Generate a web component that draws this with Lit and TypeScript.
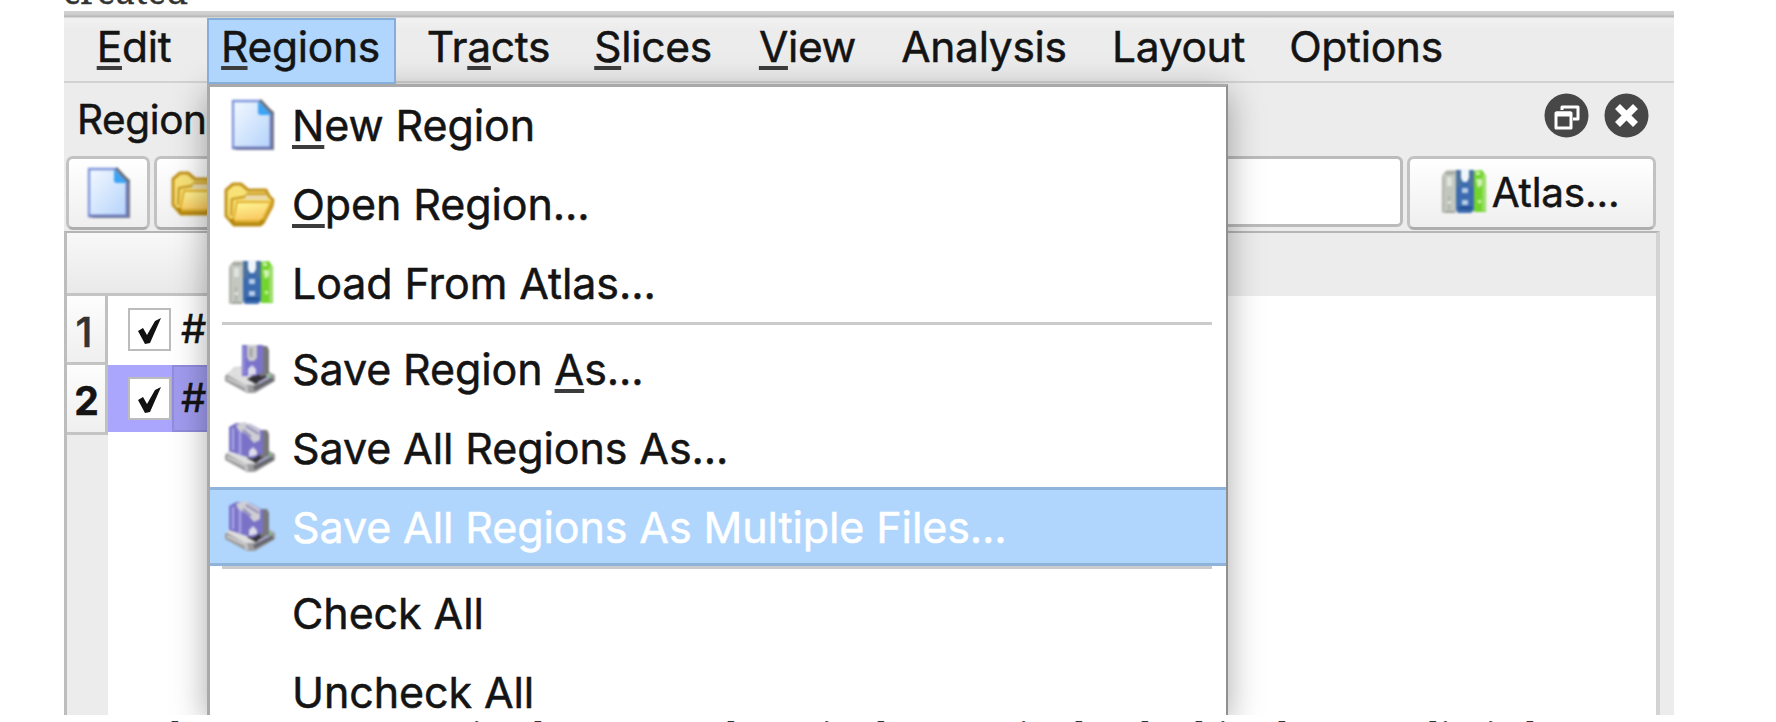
import { LitElement, html, css, svg } from "lit";
import { customElement, property } from "lit/decorators.js";
import { classMap } from "lit/directives/class-map.js";

const doc = svg`
  <defs><linearGradient id="dg" x1="0" y1="0" x2="1" y2="1"><stop offset="0" stop-color="#f4f9ff"/><stop offset="1" stop-color="#b4d3fb"/></linearGradient></defs>
  <path d="M12 51H50V13L46 10V47H12Z" fill="#77777d"/>
  <path d="M9 2H36L47 15V49H9Z" fill="url(#dg)" stroke="#7f97dc" stroke-width="2.4"/>
  <path d="M9 49H47V16" fill="none" stroke="#6d77b4" stroke-width="2.4"/>
  <path d="M34 2L48 16H37Q33 16 34 11Z" fill="#3da4f4"/>
  <path d="M36 1L49 15" stroke="#66717f" stroke-width="3"/>`;
const folder = svg`
  <defs><linearGradient id="fg" x1="0" y1="0" x2="0.3" y2="1"><stop offset="0" stop-color="#fff99a"/><stop offset="1" stop-color="#f9c962"/></linearGradient></defs>
  <path d="M2 12L9 6H17L24 12H42L45 18L49 22L48 28L39 45L36 47H10L2 38Z" fill="#f8e277" stroke="#c3941f" stroke-width="3" stroke-linejoin="round"/>
  <path d="M7 38L8 21L20 19L24 16H42" fill="none" stroke="#cda02b" stroke-width="2.5"/>
  <path d="M22 17H43V22H20Z" fill="#ead9a6"/>
  <path d="M13 24H47L38 43H9Z" fill="url(#fg)" stroke="#e1b02f" stroke-width="2" stroke-linejoin="round"/>
  <path d="M7 41L10 46H36L39 42" fill="none" stroke="#b5870f" stroke-width="3.5"/>`;
const books = svg`
  <path d="M5 9L10 4H19V47H5Z" fill="#c3c7c0"/>
  <path d="M8 7H18M8 46H18" stroke="#9da29b" stroke-width="2"/>
  <path d="M6 11V46M12 30V44" stroke="#aeb3ab" stroke-width="2"/>
  <path d="M10 11h5v9h-5zM11 35h3v3h-3z" fill="#e0e4de"/>
  <path d="M19 4H37V44L34 47H21L19 44Z" fill="#3c6cb0"/>
  <path d="M19 5h5v16h-5zM32 5h5v16h-5z" fill="#4c739e"/>
  <path d="M24 3H32V12L30 16H26L24 12Z" fill="#f0f5fb"/>
  <path d="M25 22h6v5h-6zM25 34h6v5h-6z" fill="#b8cce8"/>
  <path d="M22 42H35" stroke="#234f94" stroke-width="3"/>
  <path d="M37 5L45 4L49 10V46H37Z" fill="#72d52d"/>
  <path d="M47 9V45" stroke="#a5df78" stroke-width="3"/>
  <path d="M39 6H43V9H39ZM39 13H45V19L41 22ZM41 34h3v3h-3z" fill="#d0f3b2"/>`;
const drive = svg`
  <path d="M1 33L11 24L34 23L51 32V38L31 50H23L1 38Z" fill="#9c9c9e"/>
  <path d="M2 31L12 24L33 25L48 32L29 42H21Z" fill="#dededf"/>
  <path d="M3 35L22 44L23 49" fill="none" stroke="#c7c7c8" stroke-width="3"/>
  <path d="M23 36L33 31L44 33L32 41Z" fill="#303034"/>
  <path d="M30 46L49 36" stroke="#66666e" stroke-width="4"/>
  <path d="M34 40L46 34" stroke="#a9a6cc" stroke-width="2"/>
  <circle cx="46" cy="33" r="1.8" fill="#75b875"/>`;
const save = svg`${drive}
  <path d="M36 3H43L45 7V31L36 34Z" fill="#77777b"/>
  <path d="M18 2H39V29L32 33H18Z" fill="#7b73ca"/>
  <path d="M23 2H33V15L30 18H25L23 14Z" fill="#c9cacb"/>
  <path d="M27 5V14" stroke="#a3a3a7" stroke-width="3"/>
  <path d="M24 33V26L28 22L32 26V31Z" fill="#dcdcea"/>
  <path d="M20 4V31" stroke="#948dde" stroke-width="2"/>`;
const saveAll = svg`${drive}
  <path d="M37 8H43L45 12V34L36 36Z" fill="#77777b"/>
  <path d="M5 5L12 1L26 2L39 9V31L29 37L5 29Z" fill="#7a72c6"/>
  <path d="M9 6V28M16 9V32" stroke="#a9a3ea" stroke-width="2.5"/>
  <path d="M12 3L20 0L27 3L36 8V18L30 21L23 13L14 8Z" fill="#cfcfd3"/>
  <path d="M22 4L35 12M19 8L27 15" stroke="#9893bf" stroke-width="2.5"/>
  <path d="M25 35V29L29 25L33 29V33Z" fill="#dcdcea"/>`;
const icons: Record<string, unknown> = { doc, folder, books, save, saveAll };

@customElement("tool-icon")
class ToolIcon extends LitElement {
  @property() name = "";
  static styles = css`
    :host { display: block; width: 52px; height: 52px; flex: none; }
    svg { display: block; overflow: visible; filter: blur(0.8px); }
  `;
  render() {
    return html`<svg width="52" height="52" viewBox="0 0 52 52">${icons[this.name]}</svg>`;
  }
}

interface Entry { label: string; icon?: string; active?: boolean }
const groups: Entry[][] = [
  [
    { label: "&New Region", icon: "doc" },
    { label: "&Open Region...", icon: "folder" },
    { label: "Load From Atlas...", icon: "books" },
  ],
  [
    { label: "Save Region &As...", icon: "save" },
    { label: "Save All Regions As...", icon: "saveAll" },
    { label: "Save All Regions As Multiple Files...", icon: "saveAll", active: true },
  ],
  [{ label: "Check All" }, { label: "Uncheck All" }],
];
// label and slot width of each menu title
const bar: [string, number][] = [
  ["&Edit", 124], ["&Regions", 189], ["Tr&acts", 185], ["&Slices", 144],
  ["&View", 165], ["Analysis", 188], ["Layout", 201], ["Options", 174],
];
// chunks of the paragraph below, each with its advance
const prose: [string, number][] = [
  ["have one more", 300], ["is", 63], ["here as one", 193], ["has a", 94], ["in", 56], ["here or", 141], ["in", 57],
  ["has", 66], ["ba", 54], ["him", 83], ["here or as", 151], ["li", 56], ["is", 41], ["has", 80],
];

// "&" marks the letter that is underlined as the keyboard mnemonic
const mnemonic = (s: string) => {
  const i = s.indexOf("&");
  return i < 0 ? html`<span>${s}</span>` : html`<span>${s.slice(0, i)}<u>${s[i + 1]}</u>${s.slice(i + 2)}</span>`;
};

@customElement("app-root")
class AppRoot extends LitElement {
  static styles = css`
    :host { display: block; position: relative; height: 722px; overflow: hidden; background: #fff;
      font-family: Inter, Roboto, sans-serif; color: #141414; }
    * { box-sizing: border-box; }
    u { text-decoration: underline; text-decoration-thickness: 4px; text-underline-offset: 4px; text-decoration-color: #3c3c3c;
      text-decoration-skip-ink: none; }
    .prose { font: 35px/40px "Noto Serif", serif; color: #333; white-space: nowrap; }
    .before { height: 11px; display: flex; align-items: flex-end; padding-left: 63px; -webkit-text-stroke: 0.4px #333; }
    .after { height: 7px; display: flex; padding-left: 171px; }
    .after span { flex: none; margin-top: -1px; }
    .frame { height: 704px; width: 1610px; margin-left: 64px; background: #ececec; position: relative;
      overflow: hidden; display: flex; flex-direction: column; -webkit-text-stroke: 0.5px currentColor; }
    .edge { height: 7px; flex: none; background: linear-gradient(#d0d0d0 0 40%, #b9b9b9 80%, #e4e4e4); }
    .bar { height: 65px; flex: none; display: flex; font-size: 42.5px; line-height: 57px; border-bottom: 2px solid #d2d2d2;
      padding-left: 19px; white-space: nowrap; letter-spacing: -0.3px; background: linear-gradient(#f1f1f1, #ececec 20%); }
    .bar div { display: flex; justify-content: center; }
    .bar div:first-child { padding-right: 22px; }
    .bar .open { background: #b0d6fe; border: 2px solid #86aedb; line-height: 53px; position: relative; z-index: 3; height: 66px;
      padding-right: 2px; }
    .title { height: 73px; flex: none; display: flex; align-items: center; padding: 0 25px 8px 13px; font-size: 40.5px; letter-spacing: -0.4px; }
    .title span { flex: 1; padding-top: 8px; }
    .title svg { display: block; margin-left: 15px; filter: blur(0.7px); }
    .tools { height: 75px; flex: none; display: flex; gap: 4px; padding-left: 2px; align-items: flex-start; }
    .btn { height: 74px; border: 3px solid #c2c2c2; border-bottom-color: #adadad; border-radius: 7px;
      background: linear-gradient(#fff, #efefef); display: flex; align-items: center; justify-content: center; }
    .new { width: 84px; padding-right: 4px; }
    .load { width: 85px; }
    .search { width: 1160px; height: 71px; border: 3px solid #bbb; border-radius: 6px; background: #fff; }
    .atlas { width: 249px; font-size: 40.5px; letter-spacing: -0.2px; gap: 3px; padding: 0 7px 2px 0; }
    .table { flex: 1; margin-right: 14px; border-left: 3px solid #bdbdbd; border-right: 4px solid #d3d3d3; border-top: 2px solid #b5b5b5;
      background: #fff; display: grid; grid-template-rows: 63px 69px 70px 1fr; grid-template-columns: 41px 1fr; }
    .head { grid-column: 1 / 3; display: flex; background: #ececec; }
    .corner { width: 160px; background: linear-gradient(#f8f8f8, #e9e9e9); border-bottom: 3px solid #c4c4c4; }
    .num { background: linear-gradient(#fdfdfd, #efefef); border-right: 3px solid #c0c0c0; border-bottom: 3px solid #c4c4c4;
      font-weight: 700; font-size: 39px; line-height: 72px; text-align: center; padding-left: 1px; }
    .num.first { font-weight: 500; color: #333; font-size: 41px; padding: 0 4px 0 0; }
    .cell { display: flex; align-items: center; padding: 0 0 3px 20px; font-size: 40px; }
    .cell.sel { background: linear-gradient(#aba6fd, #aba6fd) left top / 900px 67px no-repeat; padding-bottom: 3px; }
    .cell span { border: 2px solid transparent; border-right: 0; padding-left: 7px; width: 200px; height: 67px; line-height: 62px; }
    .cell.sel span { background: #a09bee; border-color: #918cdc; }
    .check { width: 43px; height: 43px; border: 2px solid #bcbcbc; background: #fff; margin-right: 1px; flex: none; }
    .check svg { display: block; }
    .side { background: #ececec; }
    .menu { position: absolute; left: 143px; top: 73px; width: 1021px; height: 631px; background: #fff; border: 3px solid #a9a9a9;
      border-right: 2px solid #909090; border-bottom: 0; overflow: hidden;
      box-shadow: 0 8px 32px rgba(0, 0, 0, 0.34); font-size: 43px; letter-spacing: -0.1px; white-space: nowrap; }
    .item { height: 79px; flex: none; display: flex; align-items: center; gap: 16px; padding: 0 0 0 14px; }
    .item:first-child { margin-top: -2px; }
    .group + .sep + .group .item:first-child { margin-top: 0; }
    .item .none { width: 52px; }
    .item.active { background: #b0d6fe; color: #fff; box-shadow: inset 0 3px #8fb3da, inset 0 -3px #8fb3da; }
    .group { display: flex; flex-direction: column; }
    .sep { height: 3px; background: #cbcbcb; margin: 0 14px 4px 12px; }
  `;

  render() {
    return html`
      <div class="prose before">created</div>
      <div class="frame">
        <div class="edge"></div>
        <div class="bar">
          ${bar.map(([b, w], i) => html`<div class=${classMap({ open: i === 1 })} style="width:${w}px">${mnemonic(b)}</div>`)}
        </div>
        <div class="title">
          <span>Region</span>
          <svg width="45" height="45" viewBox="0 0 45 45"><circle cx="22.5" cy="22.5" r="22" fill="#474747"/>
            <g fill="none" stroke="#fff" stroke-width="3" stroke-linejoin="round"><path d="M18 17V14H34V26H29"/><path d="M12 20H27V35H12Z"/></g>
            <path d="M12 21H27" stroke="#fff" stroke-width="5"/></svg>
          <svg width="45" height="45" viewBox="0 0 45 45"><circle cx="22.5" cy="22.5" r="22" fill="#474747"/>
            <path d="M13.5 13.5L31.5 31.5M31.5 13.5L13.5 31.5" stroke="#fff" stroke-width="7"/></svg>
        </div>
        <div class="tools">
          <div class="btn new"><tool-icon name="doc"></tool-icon></div>
          <div class="btn load"><tool-icon name="folder"></tool-icon></div>
          <div class="search"></div>
          <div class="btn atlas"><tool-icon name="books"></tool-icon>Atlas...</div>
        </div>
        <div class="table">
          <div class="head"><div class="corner"></div></div>
          ${[1, 2].map((n) => html`
            <div class=${classMap({ num: true, first: n === 1 })}>${n}</div>
            <div class=${classMap({ cell: true, sel: n === 2 })}>
              <div class="check"><svg width="39" height="39" viewBox="0 0 39 39"><path d="M8 21L13 18L17 25L25 11L31 8L20 33L15 34Z" fill="#111"/></svg></div>
              <span>#</span>
            </div>`)}
          <div class="side"></div>
        </div>
        <div class="menu">
          ${groups.map((g, i) => html`
            ${i ? html`<div class="sep"></div>` : ""}
            <div class="group">
              ${g.map((e) => html`<div class=${classMap({ item: true, active: !!e.active })}>
                ${e.icon ? html`<tool-icon name=${e.icon}></tool-icon>` : html`<div class="none"></div>`}${mnemonic(e.label)}
              </div>`)}
            </div>`)}
        </div>
      </div>
      <div class="prose after">${prose.map(([t, w]) => html`<span style="width:${w}px">${t}</span>`)}</div>
    `;
  }
}
